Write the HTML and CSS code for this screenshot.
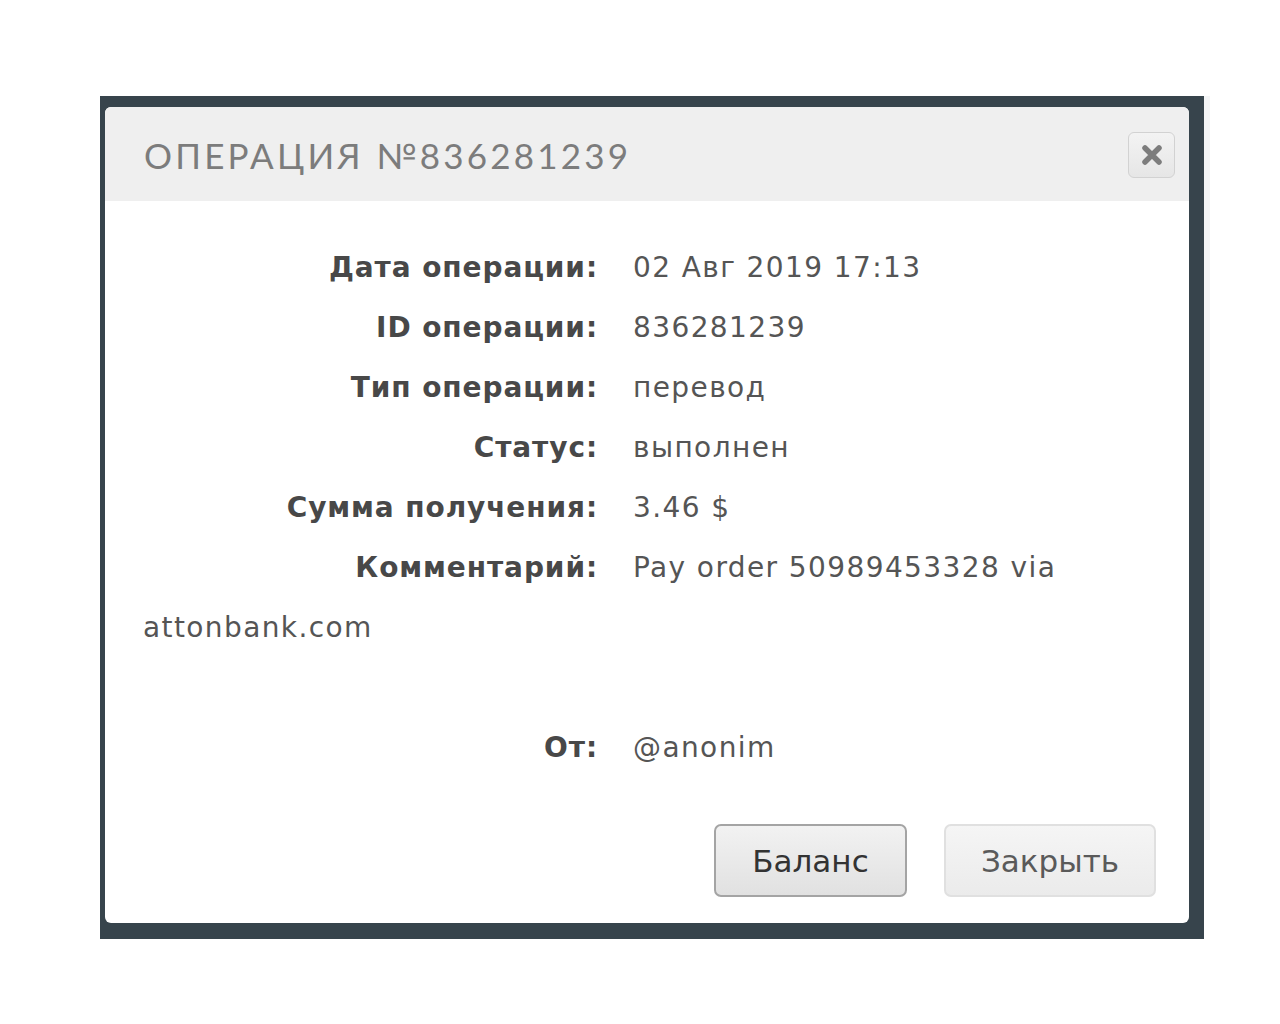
FILE: index.html
```html
<!DOCTYPE html>
<html lang="ru">
<head>
<meta charset="utf-8">
<title>Операция №836281239</title>
<link rel="stylesheet" href="styles.css">
</head>
<body>
<div class="page">
  <div class="frame">
    <div class="modal">
      <div class="modal-header">
        <h2 class="modal-title">Операция №836281239</h2>
        <button class="close-btn" aria-label="Закрыть">
          <svg width="22" height="22" viewBox="0 0 22 22"><path d="M4 4 L18 18 M18 4 L4 18" stroke="#7d7d7d" stroke-width="5.5" stroke-linecap="round"/></svg>
        </button>
      </div>
      <div class="modal-body">
        <div class="row"><span class="label">Дата операции:</span><span class="value">02 Авг 2019 17:13</span></div>
        <div class="row"><span class="label">ID операции:</span><span class="value">836281239</span></div>
        <div class="row"><span class="label">Тип операции:</span><span class="value">перевод</span></div>
        <div class="row"><span class="label">Статус:</span><span class="value">выполнен</span></div>
        <div class="row"><span class="label">Сумма получения:</span><span class="value">3.46 $</span></div>
        <div class="row"><span class="label">Комментарий:</span><span class="value">Pay order 50989453328 via attonbank.com</span></div>
        <div class="spacer"></div>
        <div class="row"><span class="label">От:</span><span class="value">@anonim</span></div>
      </div>
      <div class="modal-footer">
        <button class="btn btn-primary">Баланс</button>
        <button class="btn btn-secondary">Закрыть</button>
      </div>
    </div>
  </div>
  <div class="edge"></div>
</div>
</body>
</html>
```

FILE: styles.css
```css
html, body {
  margin: 0;
  padding: 0;
  background: #ffffff;
}

.page {
  display: flex;
  align-items: flex-start;
  padding: 96px 0 0 100px;
}

.frame {
  box-sizing: border-box;
  width: 1104px;
  height: 843px;
  background: #37444c;
  padding: 11px 15px 15px 5px;
}

.edge {
  width: 6px;
  height: 744px;
  background: #f4f5f6;
}

.modal {
  height: 816px;
  background: #ffffff;
  border-radius: 6px;
  display: flex;
  flex-direction: column;
  font-family: "DejaVu Sans", "Open Sans", sans-serif;
}

.modal-header {
  box-sizing: border-box;
  height: 94px;
  background: #efefef;
  border-radius: 6px 6px 0 0;
  display: flex;
  align-items: center;
  justify-content: space-between;
  padding: 2px 14px 0 39px;
}

.modal-title {
  margin: 0;
  font-family: "Lato", "Open Sans", sans-serif;
  font-weight: 400;
  font-size: 35px;
  letter-spacing: 3.2px;
  text-transform: uppercase;
  color: #7c7c7c;
}

.close-btn {
  box-sizing: border-box;
  width: 47px;
  height: 46px;
  border: 1px solid #d2d2d2;
  border-radius: 6px;
  background: linear-gradient(#f3f3f3, #e6e6e6);
  display: flex;
  align-items: center;
  justify-content: center;
  padding: 0;
}

.modal-body {
  padding: 37px 38px 0 38px;
  flex: 1;
}

.row {
  line-height: 60px;
  font-size: 28px;
  color: #555555;
}

.label {
  display: inline-block;
  width: 455px;
  margin-right: 35px;
  text-align: right;
  font-weight: 700;
  letter-spacing: 0.9px;
  color: #484848;
}

.value {
  color: #555555;
  letter-spacing: 1.4px;
}

.spacer {
  height: 60px;
}

.modal-footer {
  display: flex;
  justify-content: flex-end;
  gap: 37px;
  padding: 0 33px 26px 0;
}

.btn {
  box-sizing: border-box;
  height: 73px;
  border-radius: 7px;
  font-family: "DejaVu Sans", sans-serif;
  font-size: 31px;
  padding: 0;
}

.btn-primary {
  width: 193px;
  border: 2px solid #a4a4a4;
  background: linear-gradient(#f2f2f2, #e1e1e1);
  color: #333333;
}

.btn-secondary {
  width: 212px;
  border: 2px solid #e0e0e0;
  background: linear-gradient(#f5f5f5, #ebebeb);
  color: #5a5a5a;
}
```
